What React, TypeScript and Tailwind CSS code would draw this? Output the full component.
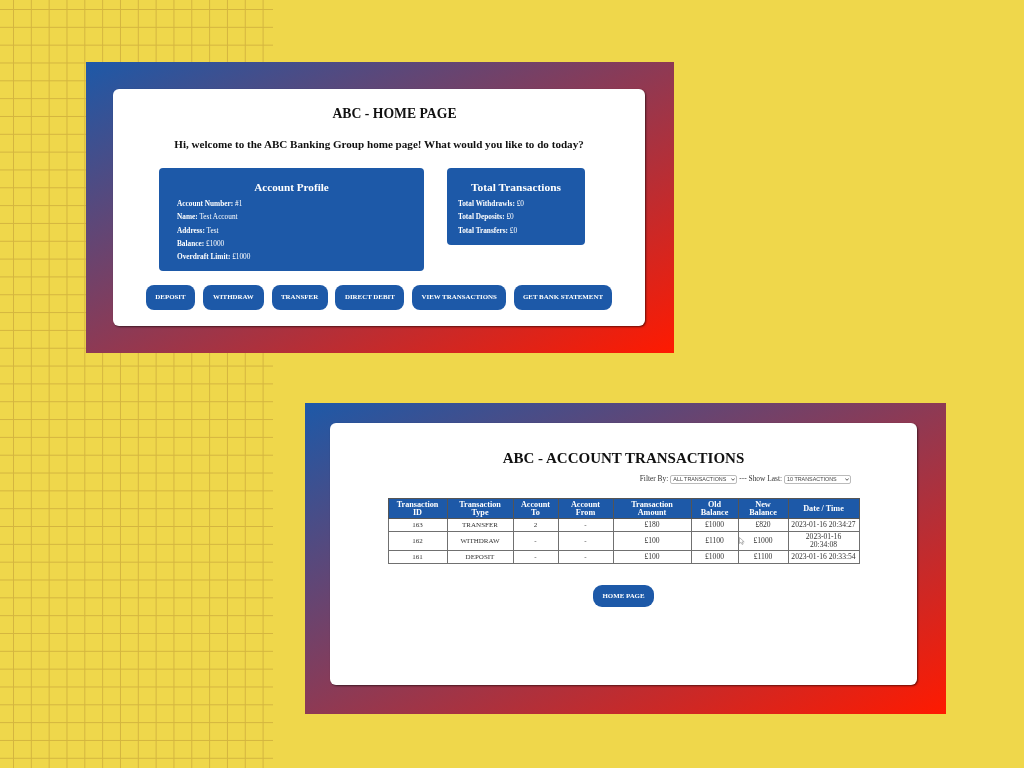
const serif = "[font-family:'Liberation_Serif','DejaVu_Serif',serif]";
const grad = "bg-[linear-gradient(to_bottom_right,#1d59a8,#ff1a00)]";

const rows = [
  ["163", "TRANSFER", "2", "-", "£180", "£1000", "£820", "2023-01-16 20:34:27"],
  ["162", "WITHDRAW", "-", "-", "£100", "£1100", "£1000", "2023-01-16 20:34:08"],
  ["161", "DEPOSIT", "-", "-", "£100", "£1000", "£1100", "2023-01-16 20:33:54"],
];

const headers = [
  ["Transaction ID", "w-[59px]"],
  ["Transaction Type", "w-[66px]"],
  ["Account To", "w-[45px]"],
  ["Account From", "w-[55px]"],
  ["Transaction Amount", "w-[78px]"],
  ["Old Balance", "w-[47px]"],
  ["New Balance", "w-[50px]"],
  ["Date / Time", "w-[71px]"],
];

const Info = ({ label, value }: { label: string; value: string }) => (
  <p className="h-[13.3px] leading-[13.3px]">
    <b>{label}:</b> {value}
  </p>
);

const Btn = ({ label, w }: { label: string; w: string }) => (
  <button className={`${w} h-[25px] shrink-0 rounded-lg bg-[#1d59a8] text-[6.9px] font-bold text-white`}>{label}</button>
);

const Select = ({ label }: { label: string }) => (
  <span className="relative block h-[9px] w-[67px]">
    <select defaultValue={label} className="block h-[9px] w-[67px] appearance-none rounded-[2px] border border-[#bbb] bg-white pl-[2px] text-[5.4px] leading-[7px] text-[#444] [font-family:'Liberation_Sans',sans-serif]">
      <option value={label}>{label}</option>
    </select>
    <svg className="pointer-events-none absolute right-[2px] top-[3px] h-[3px] w-[4px]" viewBox="0 0 4 3">
      <path d="M0.4 0.5L2 2.3L3.6 0.5" fill="none" stroke="#333" strokeWidth="0.8" />
    </svg>
  </span>
);

export default function App() {
  return (
    <div className={`${serif} relative h-[768px] w-[1024px] overflow-hidden bg-[#efd74b] pl-[86px] pt-[62px] text-[#111]`}>
      {/* grid paper behind the cards */}
      <div className="absolute left-0 top-0 h-[768px] w-[273px] bg-[linear-gradient(to_right,#d4b53f_1px,transparent_1px),linear-gradient(to_bottom,#d4b53f_1px,transparent_1px)] bg-[size:17.83px_17.83px] bg-[position:13px_9px]" />

      <div className={`relative flex h-[291px] w-[588px] ${grad} pb-[27px] pl-[27px] pr-[29px] pt-[27px]`}>
        <div className="flex flex-1 flex-col items-center rounded-md bg-white pt-[17px] shadow-[1px_1px_2px_rgba(0,0,0,0.55)] [will-change:transform]">
          <h1 className="ml-[31px] h-[16px] text-[13.7px] font-bold leading-[16px]">ABC - HOME PAGE</h1>
          <h2 className="mt-[14px] h-[16px] text-[11.1px] font-bold leading-[16px]">
            Hi, welcome to the ABC Banking Group home page! What would you like to do today?
          </h2>
          <div className="mt-[16px] flex w-full items-start pl-[46px]">
            <div className="h-[103px] w-[265px] rounded bg-[#1d59a8] pl-[18px] pt-[12px] text-[7.3px] text-white">
              <h3 className="-ml-[18px] mb-[2px] h-[15px] text-center text-[11.2px] font-bold leading-[15px]">Account Profile</h3>
              <Info label="Account Number" value="#1" />
              <Info label="Name" value="Test Account" />
              <Info label="Address" value="Test" />
              <Info label="Balance" value="£1000" />
              <Info label="Overdraft Limit" value="£1000" />
            </div>
            <div className="ml-[23px] h-[77px] w-[138px] rounded bg-[#1d59a8] pl-[11px] pt-[12px] text-[7.3px] text-white">
              <h3 className="-ml-[11px] mb-[2px] h-[15px] text-center text-[11.4px] font-bold leading-[15px]">Total Transactions</h3>
              <Info label="Total Withdrawls" value="£0" />
              <Info label="Total Deposits" value="£0" />
              <Info label="Total Transfers" value="£0" />
            </div>
          </div>
          <div className="mt-[14px] flex w-full gap-[7.8px] pl-[33px]">
            <Btn label="DEPOSIT" w="w-[49px]" />
            <Btn label="WITHDRAW" w="w-[61px]" />
            <Btn label="TRANSFER" w="w-[56px]" />
            <Btn label="DIRECT DEBIT" w="w-[69px]" />
            <Btn label="VIEW TRANSACTIONS" w="w-[94px]" />
            <Btn label="GET BANK STATEMENT" w="w-[98px]" />
          </div>
        </div>
      </div>

      <div className={`relative ml-[219px] mt-[50px] flex h-[311px] w-[641px] ${grad} pb-[29px] pl-[25px] pr-[29px] pt-[20px]`}>
        <div className="relative flex flex-1 flex-col items-center rounded-md bg-white pt-[26px] shadow-[1px_1px_2px_rgba(0,0,0,0.55)] [will-change:transform]">
          <h1 className="h-[18px] text-[15px] font-bold leading-[18px]">ABC - ACCOUNT TRANSACTIONS</h1>
          <div className="mt-[7px] flex h-[10px] w-full items-center justify-end gap-[2px] pr-[66px] text-[7.4px] text-[#333]">
            <span>Filter By:</span>
            <Select label="ALL TRANSACTIONS" />
            <span>--- Show Last:</span>
            <Select label="10 TRANSACTIONS" />
          </div>
          <table className="mt-[14px] table-fixed border-collapse text-center text-[7px] text-[#333]">
            <thead>
              <tr className="h-[20px] bg-[#1d59a8] text-white">
                {headers.map(([h, w]) => (
                  <th key={h} className={`${w} border border-[#555] px-[6px] text-[8.2px] font-bold leading-[8px]`}>{h}</th>
                ))}
              </tr>
            </thead>
            <tbody>
              {rows.map((r, i) => (
                <tr key={r[0]} className={i === 1 ? "h-[19px]" : "h-[13px]"}>
                  {r.map((c, j) => (
                    <td key={j} className={`border border-[#707070] leading-[8px] ${j === 7 ? (i === 1 ? "px-[12px] text-[7.6px]" : "whitespace-nowrap text-[7.6px]") : j >= 4 ? "text-[7.6px]" : ""}`}>{c}</td>
                  ))}
                </tr>
              ))}
            </tbody>
          </table>
          {/* mouse pointer caught in the screenshot */}
          <svg className="absolute left-[409px] top-[114px] h-[8px] w-[6px]" viewBox="0 0 6 8">
            <path d="M0.5 0.5V6.5L2 5.3L3.2 7.5L4.2 7L3.1 4.9H5.2Z" fill="#fff" stroke="#888" strokeWidth="0.6" />
          </svg>
          <button className="mt-[21px] h-[22px] w-[61px] rounded-[9px] bg-[#1d59a8] text-[6.9px] font-bold text-white">HOME PAGE</button>
        </div>
      </div>
    </div>
  );
}
